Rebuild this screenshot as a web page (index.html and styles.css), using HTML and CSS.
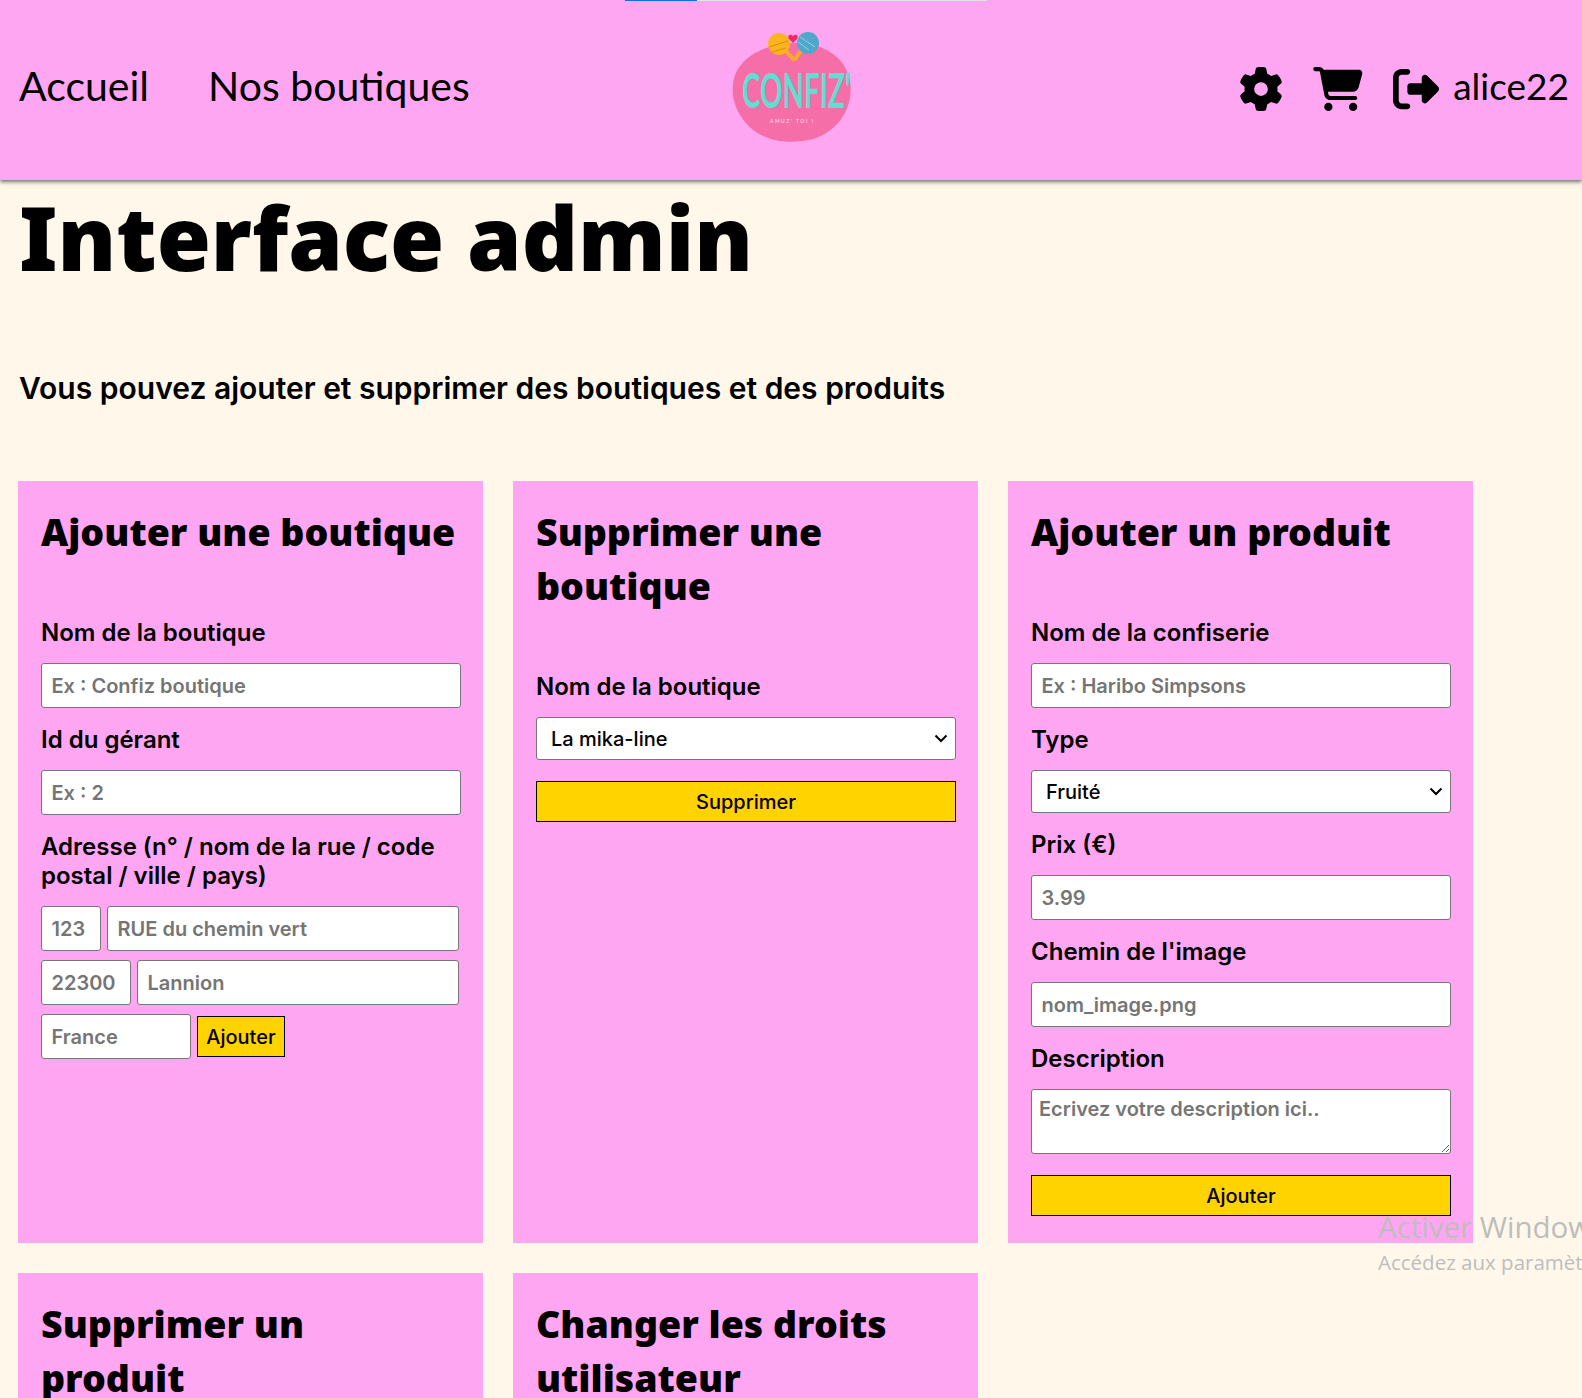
FILE: index.html
```html
<!DOCTYPE html>
<html lang="fr">

<head>
    <meta charset="UTF-8">
    <meta name="viewport" content="width=device-width, initial-scale=1.0">
    <title>Interface admin</title>
    <link rel="stylesheet" href="styles.css">
</head>

<body>
    <div class="loading-bar"><span class="loading-done"></span></div>

    <header class="topbar">
        <nav class="nav-links">
            <a href="#">Accueil</a>
            <a href="#">Nos boutiques</a>
        </nav>

        <svg class="logo" viewBox="0 0 130 124" role="img" aria-label="Confiz'">
            <path d="M64 15c28-1 52 12 57 38 4 26-11 50-37 58-24 6-52 3-68-17C4 79 1 63 6 47 14 27 38 16 64 15z" fill="#f56ea7"/>
            <path d="M57 23l7 8M72 23l-6 8" stroke="#f7a92b" stroke-width="4" stroke-linecap="round"/>
            <circle cx="50" cy="16" r="11" fill="#fbb41e"/>
            <path d="M40 19l19-6M43 24l14-4" stroke="#e08d12" stroke-width="1"/>
            <circle cx="79" cy="15" r="11" fill="#4fa7c9"/>
            <path d="M71 9l15 10M69 14l11 8" stroke="#8fd2e6" stroke-width="1"/>
            <path d="M64 8c-3-3-6 0-4 3l4 4 4-4c2-3-1-6-4-3z" fill="#f0295f"/>
            <text class="logo-name" transform="translate(13 80) scale(.58 1)">CONFIZ'</text>
            <text class="logo-slogan" x="41" y="95" textLength="43" lengthAdjust="spacing">AMUZ' TOI !</text>
        </svg>

        <div class="user-tools">
            <a href="#" class="icon-link">
                <svg class="icon-gear" viewBox="0 0 512 512"><path d="M495.9 166.6c3.2 8.7 .5 18.4-6.4 24.6l-43.3 39.4c1.1 8.3 1.7 16.8 1.7 25.4s-.6 17.1-1.7 25.4l43.3 39.4c6.9 6.2 9.6 15.9 6.4 24.6c-4.4 11.9-9.7 23.3-15.8 34.3l-4.7 8.1c-6.6 11-14 21.4-22.1 31.2c-5.9 7.2-15.7 9.6-24.5 6.8l-55.7-17.7c-13.4 10.3-28.2 18.9-44 25.4l-12.5 57.1c-2 9.1-9 16.3-18.2 17.8c-13.8 2.3-28 3.5-42.5 3.5s-28.7-1.2-42.5-3.5c-9.2-1.5-16.2-8.7-18.2-17.8l-12.5-57.1c-15.8-6.5-30.6-15.1-44-25.4L83.1 425.9c-8.8 2.8-18.6 .3-24.5-6.8c-8.1-9.8-15.5-20.2-22.1-31.2l-4.7-8.1c-6.1-11-11.4-22.4-15.8-34.3c-3.2-8.7-.5-18.4 6.4-24.6l43.3-39.4C64.6 273.1 64 264.6 64 256s.6-17.1 1.7-25.4L22.4 191.2c-6.9-6.2-9.6-15.9-6.4-24.6c4.4-11.9 9.7-23.3 15.8-34.3l4.7-8.1c6.6-11 14-21.4 22.1-31.2c5.9-7.2 15.7-9.6 24.5-6.8l55.7 17.7c13.4-10.3 28.2-18.9 44-25.4l12.5-57.1c2-9.1 9-16.3 18.2-17.8C227.3 1.2 241.5 0 256 0s28.7 1.2 42.5 3.5c9.2 1.5 16.2 8.7 18.2 17.8l12.5 57.1c15.8 6.5 30.6 15.1 44 25.4l55.7-17.7c8.8-2.8 18.6-.3 24.5 6.8c8.1 9.8 15.5 20.2 22.1 31.2l4.7 8.1c6.1 11 11.4 22.4 15.8 34.3zM256 336a80 80 0 1 0 0-160 80 80 0 1 0 0 160z"/></svg>
            </a>
            <a href="#" class="icon-link">
                <svg class="icon-cart" viewBox="0 0 576 512"><path d="M0 24C0 10.7 10.7 0 24 0H69.5c22 0 41.5 12.8 50.6 32h411c26.3 0 45.5 25 38.6 50.4l-41 152.3c-8.5 31.4-37 53.3-69.5 53.3H170.7l5.4 28.5c2.2 11.3 12.1 19.5 23.6 19.5H488c13.3 0 24 10.7 24 24s-10.7 24-24 24H199.7c-34.6 0-64.3-24.6-70.7-58.5L77.4 54.5c-.7-3.8-4-6.5-7.9-6.5H24C10.7 48 0 37.3 0 24zM128 464a48 48 0 1 1 96 0 48 48 0 1 1 -96 0zm336-48a48 48 0 1 1 0 96 48 48 0 1 1 0-96z"/></svg>
            </a>
            <a href="#" class="icon-link logout">
                <svg class="icon-logout" viewBox="0 0 512 512"><path d="M377.9 105.9L500.7 228.7c7.2 7.2 11.3 17.1 11.3 27.3s-4.1 20.1-11.3 27.3L377.9 406.1c-6.4 6.4-15 9.9-24 9.9c-18.7 0-33.9-15.2-33.9-33.9l0-62.1-128 0c-17.7 0-32-14.3-32-32l0-64c0-17.7 14.3-32 32-32l128 0 0-62.1c0-18.7 15.2-33.9 33.9-33.9c9 0 17.6 3.6 24 9.9zM160 96L96 96c-17.7 0-32 14.3-32 32l0 256c0 17.7 14.3 32 32 32l64 0c17.7 0 32 14.3 32 32s-14.3 32-32 32l-64 0c-53 0-96-43-96-96L0 128C0 75 43 32 96 32l64 0c17.7 0 32 14.3 32 32s-14.3 32-32 32z"/></svg>
                <span class="username">alice22</span>
            </a>
        </div>
    </header>

    <main class="content">
        <h1>Interface admin</h1>
        <p class="intro">Vous pouvez ajouter et supprimer des boutiques et des produits</p>

        <div class="cards">
            <section class="card">
                <h2>Ajouter une boutique</h2>
                <form action="#" method="post">
                    <label for="shopName">Nom de la boutique</label>
                    <input type="text" id="shopName" placeholder="Ex : Confiz boutique">
                    <label for="managerId">Id du gérant</label>
                    <input type="text" id="managerId" placeholder="Ex : 2">
                    <label for="number" class="label-address">Adresse (n° / nom de la rue / code postal / ville / pays)</label>
                    <div class="address-row">
                        <input type="text" id="number" class="w-number" placeholder="123">
                        <input type="text" class="w-fill" placeholder="RUE du chemin vert">
                    </div>
                    <div class="address-row">
                        <input type="text" class="w-zip" placeholder="22300">
                        <input type="text" class="w-fill" placeholder="Lannion">
                    </div>
                    <div class="address-row">
                        <input type="text" class="w-country" placeholder="France">
                        <button type="submit" class="button button-small">Ajouter</button>
                    </div>
                </form>
            </section>

            <section class="card">
                <h2>Supprimer une boutique</h2>
                <form action="#" method="post">
                    <label for="shopDelete">Nom de la boutique</label>
                    <select id="shopDelete">
                        <option>La mika-line</option>
                    </select>
                    <button type="submit" class="button">Supprimer</button>
                </form>
            </section>

            <section class="card">
                <h2>Ajouter un produit</h2>
                <form action="#" method="post">
                    <label for="candyName">Nom de la confiserie</label>
                    <input type="text" id="candyName" placeholder="Ex : Haribo Simpsons">
                    <label for="candyType">Type</label>
                    <select id="candyType">
                        <option>Fruité</option>
                    </select>
                    <label for="price">Prix (€)</label>
                    <input type="text" id="price" placeholder="3.99">
                    <label for="imagePath">Chemin de l'image</label>
                    <input type="text" id="imagePath" placeholder="nom_image.png">
                    <label for="description">Description</label>
                    <textarea id="description" placeholder="Ecrivez votre description ici.."></textarea>
                    <button type="submit" class="button">Ajouter</button>
                </form>
            </section>

            <section class="card">
                <h2>Supprimer un<br>produit</h2>
            </section>

            <section class="card">
                <h2>Changer les droits utilisateur</h2>
            </section>
        </div>
    </main>

    <div class="watermark">
        <div class="watermark-title">Activer Windows</div>
        <div class="watermark-text">Accédez aux paramètres pour activer Windows.</div>
    </div>
</body>

</html>
```

FILE: styles.css
```css
html,
body {
    height: 1398px;
    overflow: hidden;
}

body {
    font-family: Inter, Arial, sans-serif;
    background-color: #fff8ea;
    color: #000;
    margin: 0;
    padding: 0;
}

.loading-bar {
    position: absolute;
    top: 0;
    left: 625px;
    width: 362px;
    height: 1px;
    background-color: #e3e3e3;
}

.loading-done {
    display: block;
    width: 72px;
    height: 100%;
    background-color: #0a6fe8;
}

.topbar {
    display: grid;
    grid-template-columns: 1fr auto 1fr;
    align-items: center;
    height: 180px;
    padding: 0 13px 0 19px;
    background-color: #ffa6f2;
    box-shadow: 0 2px 4px rgba(0, 0, 0, 0.55);
}

.nav-links {
    display: flex;
    gap: 59px;
    margin-bottom: 10px;
    font-family: Lato, sans-serif;
    font-size: 41px;
}

.nav-links a,
.icon-link {
    color: #000;
    text-decoration: none;
}

.logo {
    width: 130px;
    height: 124px;
}

.logo-name {
    font-family: Lato, sans-serif;
    font-weight: 700;
    font-size: 48px;
    fill: #5fdfd0;
}

.logo-slogan {
    font-family: Lato, sans-serif;
    font-size: 5px;
    fill: #fbe3ee;
}

.user-tools {
    display: flex;
    justify-content: flex-end;
    align-items: center;
    gap: 30px;
    margin-bottom: 2px;
}

.icon-link {
    display: flex;
    align-items: center;
}

.icon-gear {
    width: 44px;
    height: 44px;
}

.icon-cart {
    width: 50px;
    height: 44px;
}

.icon-logout {
    width: 46px;
    height: 46px;
}

.logout {
    gap: 14px;
}

.username {
    margin-bottom: 8px;
    font-family: Lato, sans-serif;
    font-size: 37px;
}

.content {
    padding: 0 18px;
}

h1 {
    margin: 0;
    padding-left: 1px;
    font-family: "Noto Sans", sans-serif;
    font-weight: 900;
    font-size: 87.7px;
    line-height: 114px;
}

.intro {
    margin: 74px 0 0 1px;
    font-size: 30px;
    font-weight: 600;
    line-height: 40px;
}

.cards {
    display: grid;
    grid-template-columns: repeat(3, 465px);
    grid-auto-rows: 762px;
    gap: 30px;
    margin-top: 73px;
}

.card {
    padding: 24px 22px 24px 23px;
    background-color: #ffa6f2;
    box-sizing: border-box;
}

h2 {
    margin: 0 0 59px;
    font-family: "Noto Sans", sans-serif;
    font-weight: 900;
    font-size: 37.5px;
    line-height: 54px;
}

label {
    display: block;
    margin-bottom: 16px;
    font-size: 24px;
    font-weight: 600;
    line-height: 29px;
}

input,
select,
textarea {
    font-family: Inter, Arial, sans-serif;
    font-size: 20px;
    background-color: #fff;
    border: 1px solid #767676;
    border-radius: 3px;
    box-sizing: border-box;
}

input {
    display: block;
    width: 100%;
    height: 45px;
    padding: 0 9.5px;
    margin-bottom: 17px;
}

input::placeholder,
textarea::placeholder {
    color: #757575;
    font-weight: 600;
}

select {
    display: block;
    width: 100%;
    height: 43px;
    padding: 0 14px;
    margin-bottom: 17px;
    font-weight: 500;
    color: #000;
    appearance: none;
    background-image: url("data:image/svg+xml,%3Csvg xmlns='http://www.w3.org/2000/svg' viewBox='0 0 14 9'%3E%3Cpath d='M1.5 1.5L7 7l5.5-5.5' fill='none' stroke='%23000' stroke-width='2'/%3E%3C/svg%3E");
    background-repeat: no-repeat;
    background-position: right 7px center;
    background-size: 14px 9px;
}

textarea {
    display: block;
    width: 100%;
    height: 65px;
    padding: 7px;
    margin-bottom: 17px;
}

.address-row {
    display: flex;
    align-items: center;
    gap: 6px;
    width: 418px;
    margin-bottom: 9px;
}

.address-row input {
    margin-bottom: 0;
}

.w-number {
    width: 60px;
}

.w-zip {
    width: 90px;
}

.w-country {
    width: 150px;
}

.w-fill {
    flex: 1;
    min-width: 0;
}

.button {
    display: block;
    width: 100%;
    height: 41px;
    margin-top: 21px;
    background-color: #ffd300;
    color: #000;
    border: 1px solid #000;
    font-family: Inter, Arial, sans-serif;
    font-size: 20px;
    font-weight: 500;
    cursor: pointer;
}

.button-small {
    width: 88px;
    flex: none;
    margin-top: 0;
    padding: 0;
}

.watermark {
    position: absolute;
    top: 1206px;
    left: 1378px;
    width: 204px;
    height: 70px;
    overflow: hidden;
    white-space: nowrap;
    color: #bdbdbd;
    font-family: "Open Sans", sans-serif;
    pointer-events: none;
}

.watermark-title {
    font-size: 29.5px;
    line-height: 42px;
}

.watermark-text {
    font-size: 20.5px;
    line-height: 28px;
}
```
